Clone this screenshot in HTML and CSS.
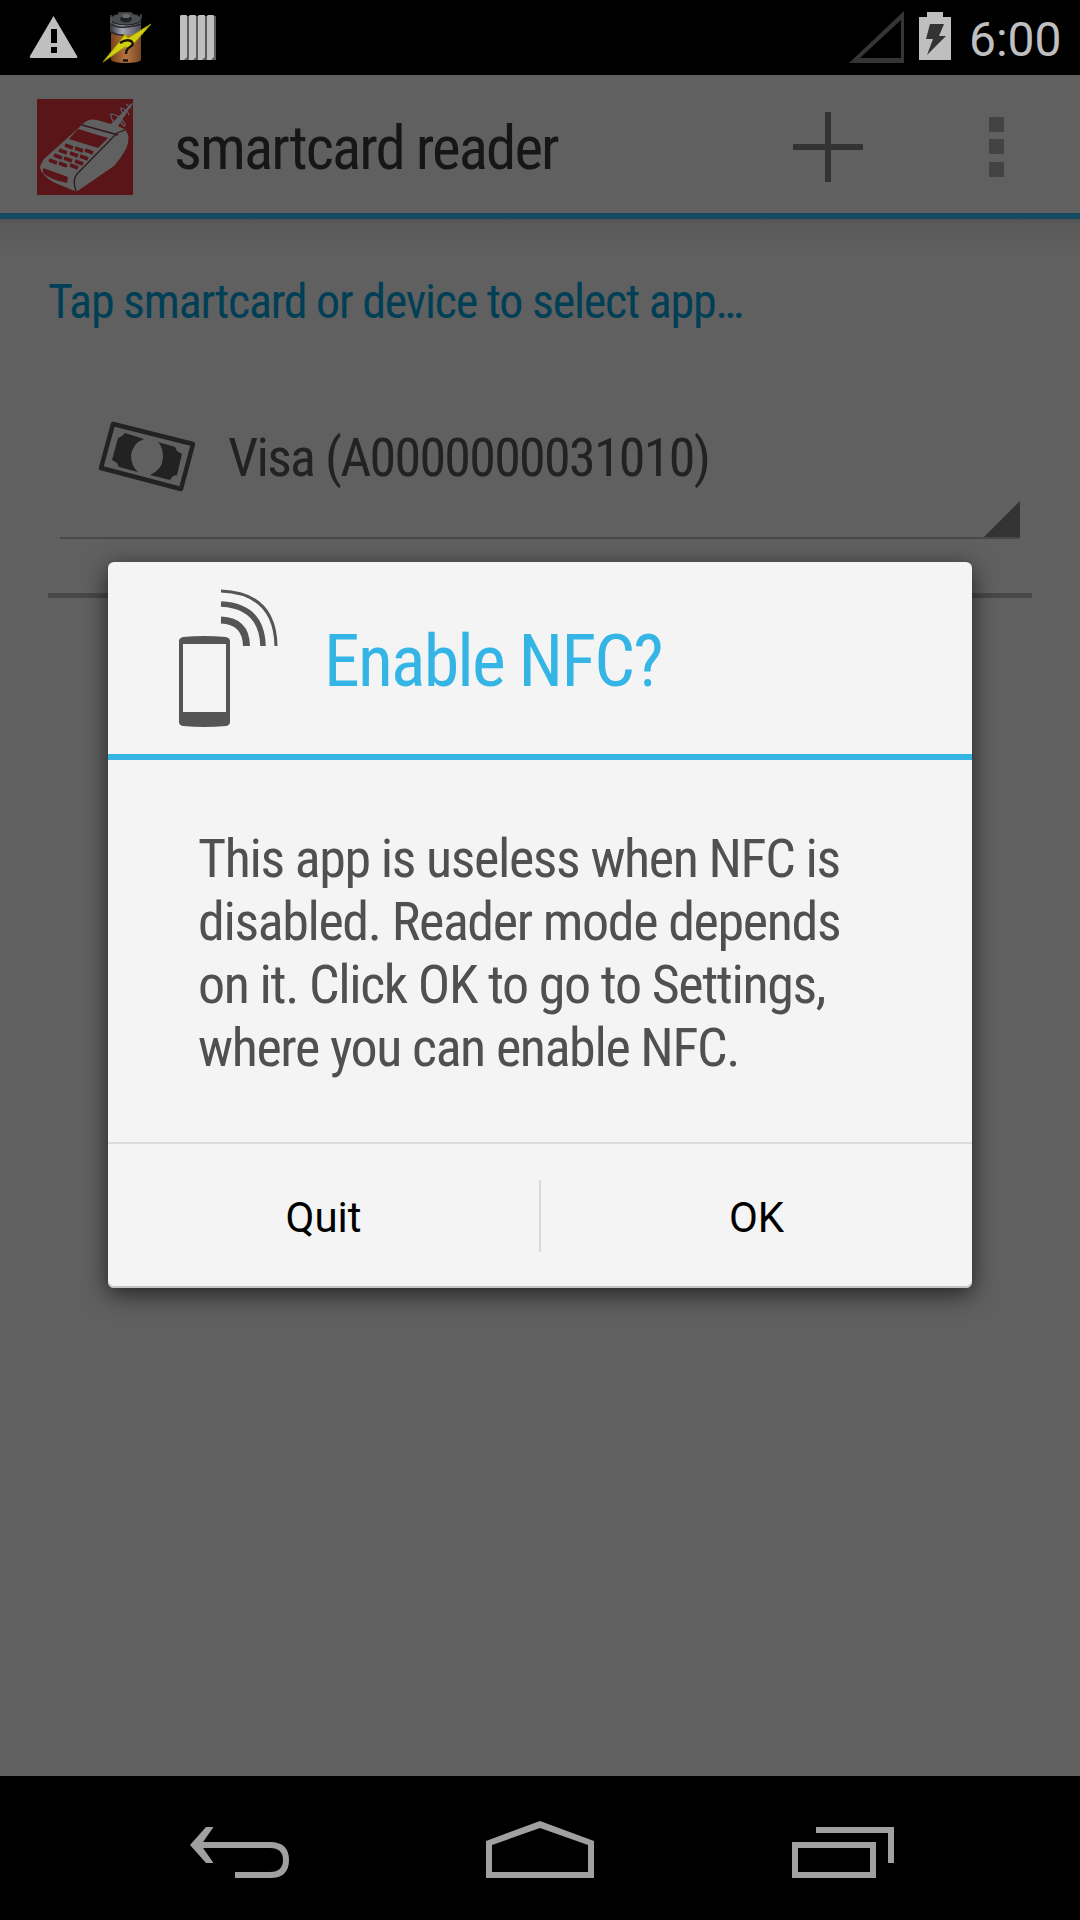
FILE: index.html
```html
<!DOCTYPE html>
<html lang="en">
<head>
<meta charset="utf-8">
<title>smartcard reader</title>
<link rel="stylesheet" href="styles.css">
</head>
<body>
<div class="screen">
  <header class="status">
    <svg class="status-left" width="240" height="75" viewBox="0 0 240 75">
      <path d="M53.500 16 77 56q1 2-1 2H32q-3 0-2-2z" fill="#bfbfbf"/>
      <path d="M51 29h6v14h-6zM51 47h6v6h-6z" fill="#000"/>
      <defs>
        <linearGradient id="silver"><stop offset="0" stop-color="#34343c"/><stop offset=".4" stop-color="#a4a4b4"/><stop offset="1" stop-color="#4a4a55"/></linearGradient>
        <linearGradient id="copper"><stop offset="0" stop-color="#79421e"/><stop offset=".5" stop-color="#b5763f"/><stop offset="1" stop-color="#784823"/></linearGradient>
      </defs>
      <path d="M111 33h30v27q-2 3-15 3t-15-3z" fill="url(#copper)"/>
      <path d="M110 19v13q2 3 16 3t15-3V19z" fill="url(#silver)"/>
      <ellipse cx="126" cy="19" rx="15.500" ry="6" fill="#4b4d50" stroke="#18191b"/>
      <path d="M111 15v8M141 14v4M118 13h14" stroke="#777" stroke-width="1"/>
      <ellipse cx="126" cy="19" rx="6" ry="3.500" fill="#202225"/><ellipse cx="126" cy="16" rx="4" ry="2" fill="#6b6d70"/>
      <path d="M111 24q5 4 15 3t15-3M111 32q7 4 15 3" fill="none" stroke="#24252c" stroke-width="1.500"/>
      <path d="M151 24 130 48l-5-1-22 15 17-21 5-7 3 4z" fill="#d2d00e" stroke="#99960a"/>
      <path d="M120 43q6-4 11-2 4 3-1 6-4 2-4 7M123 60.500h5" fill="none" stroke="#17130a" stroke-width="2.500"/>
      <path d="M182 16h34v44h-34z" fill="#5c5c5c"/>
      <path d="M180 16q0-1 2-1h4q1 0 1 1v41l-3 3h-4zM189 16q0-1 2-1h4q1 0 1 1v41l-3 3h-4zM198 16q0-1 2-1h4q1 0 1 1v41l-3 3h-4zM207 16q0-1 2-1h4q1 0 1 1v41l-3 3h-4z" fill="#bfbfbf"/>
    </svg>
    <svg width="113" height="75" viewBox="845 0 113 75">
      <path d="M849 63 904 11v52zM860 58h41V20z" fill="#333537" fill-rule="evenodd"/>
      <path d="M927 12h16v5h8v43h-32V17h8z" fill="#bfbfbf"/>
      <path d="M930 24h14l-5 12h7l-19 19 6-16h-7z" fill="#333"/>
    </svg>
    <span class="clock">6:00</span>
  </header>

  <div class="bar">
    <svg class="logo" width="96" height="96" viewBox="0 0 96 96">
      <path d="M0 0h96v96H0z" fill="#591517"/>
      <path d="M46 25q5-6 14-4l14 4L94 5l2-1-15 23 6 3q6 4 4 14-2 9-14 23L42 91q-2 2-7 0L16 83Q5 76 3 69q0-3 4-9z" fill="#606060"/>
      <path d="M45 26 81 36M88 31 80 34 40 75q-5 6-1 17" fill="none" stroke="#301820" stroke-width="1.300"/>
      <path d="M41 30 71 39 61 49 32 40zM6 69l25 9-1 6Q14 81 6 74z" fill="#591517"/>
      <path d="M28 46l8 3M38 49l8 3M48 51l8 3M22 51l8 3M33 54l8 3M43 57l8 3M17 56l8 3M27 59l8 3M38 62l8 3M12 61l8 3M22 64l8 3M33 66l8 3" stroke="#591517" stroke-width="3.500"/>
      <path d="M79 27q-6-9-5-12 6 0 12 7 4 5 1 5-5-4-4-10M88 17q-5-6-4-8 6 1 8 7M94 9l-5-4M90 10l5-5" fill="none" stroke="#58616b" stroke-width="1.200"/>
    </svg>
    <h1 class="title cond">smartcard reader</h1>
    <svg class="plus" width="72" height="72" viewBox="0 0 72 72"><path d="M33 1h6v32h32v6H39v32h-6V39H1v-6h32z" fill="#333"/></svg>
    <svg class="more" width="15" height="60" viewBox="0 0 15 60"><path d="M0 0h15v15H0zM0 22h15v15H0zM0 45h15v15H0z" fill="#434343"/></svg>
  </div>

  <main class="content">
    <p class="hint cond">Tap smartcard or device to select app…</p>
    <div class="spinner">
      <svg class="note" width="98" height="72" viewBox="98 420 98 72">
        <path d="M113 423 193 443 181 488 101 467z" fill="none" stroke="#222" stroke-width="4.500" stroke-linejoin="round"/>
        <path d="M125 432l19 6q-11 4-13 16 0 11 7 17l-19-5-2-4-5-3 6-22 4-2zM158 441l17 5 2 4 5 3-5 21-4 1-3 4-20-5q12-5 13-17 0-11-5-16z" fill="#222"/>
      </svg>
      <span class="choice cond">Visa (A0000000031010)</span>
      <svg class="corner" width="36" height="36" viewBox="0 0 36 36"><path d="M36 0v36H0z" fill="#333"/></svg>
    </div>
    <div class="rule"></div>
  </main>

  <nav class="nav">
    <svg width="1080" height="144" viewBox="0 1776 1080 144" fill="#a0a0a0">
      <path d="M201 1842h69q19 0 19 18t-19 18h-35v-6h35q13 0 13-12t-13-12h-69z"/>
      <path d="M206 1827h7.500l-12.500 18 12.500 18H206l-16-18z"/>
      <path d="M486 1841 540 1821 594 1841V1878H486zM492 1845V1872H588V1845L540 1828z" fill-rule="evenodd"/>
      <path d="M792 1842h84v36h-84zM798 1848v24h72v-24zM816 1827h78v36h-6v-30h-72z" fill-rule="evenodd"/>
    </svg>
  </nav>

  <section class="dialog">
    <div class="dialog-head">
      <svg class="phone" width="110" height="150" viewBox="172 580 110 150">
        <path d="M179 641q0-3 4-4 21-2 43 0 4 1 4 4v81q0 3-4 4-22 2-43 0-4-1-4-4zM183 644v68h43v-68z" fill="#555" fill-rule="evenodd"/>
        <g fill="none" stroke="#555"><path d="M221 591q54 2 55 55" stroke-width="3"/><path d="M221 604q41 2 42 42" stroke-width="5.500"/><path d="M221 620q25 1 25.500 26" stroke-width="7"/></g>
      </svg>
      <h2 class="dialog-title cond">Enable NFC?</h2>
    </div>
    <p class="message cond">This app is useless when NFC is<br>disabled. Reader mode depends<br>on it. Click OK to go to Settings,<br>where you can enable NFC.</p>
    <div class="actions"><button>Quit</button><i></i><button>OK</button></div>
  </section>
</div>
</body>
</html>
```
FILE: styles.css
```css
* { box-sizing: border-box; margin: 0; padding: 0; }
body { background: #606060; font-family: Roboto, sans-serif; }
.screen { position: relative; width: 1080px; height: 1920px; display: flex; flex-direction: column; overflow: hidden; }
.cond { font-family: "Roboto Condensed", Roboto, sans-serif; font-stretch: 75%; font-weight: 450; letter-spacing: -.0255em; white-space: nowrap; }
.status { height: 75px; background: #000; display: flex; }
.status-left { margin-right: auto; }
.status svg, .nav svg { display: block; }
.clock { width: 122px; padding-left: 11px; color: #bfbfbf; font-size: 48px; line-height: 80px; }
.bar { height: 144px; border-bottom: 6px solid #154a60; display: flex; align-items: center; padding: 6px 76px 0 37px; }
.title { flex: 1; margin-left: 41px; padding-top: 2px; font-size: 61px; letter-spacing: -.031em; color: #161616; }
.plus { margin-right: 125px; }
.content { flex: 1; padding: 48px 48px 0; background: linear-gradient(#525252, #595959 4px, #606060 36px); }
.hint { font-size: 48px; line-height: 70px; color: #003f56; }
.spinner { position: relative; display: flex; align-items: center; height: 170px; margin: 32px 12px 0; padding: 8px 0 0 38px; border-bottom: 2px solid #484848; }
.choice { margin-left: 32px; font-size: 54px; letter-spacing: -.032em; color: #222; }
.corner { position: absolute; right: 0; bottom: 0; }
.rule { height: 5px; margin-top: 54px; background: #484848; }
.nav { height: 144px; background: #000; }
.dialog { position: absolute; left: 108px; top: 562px; width: 864px; height: 726px; border-radius: 6px; background: #f4f4f4; box-shadow: 0 6px 24px rgba(0,0,0,.65), inset 0 -2px #c4c4c4; display: flex; flex-direction: column; }
.dialog-head { height: 198px; border-bottom: 6px solid #35b5e5; display: flex; align-items: center; padding-left: 64px; }
.phone { margin-bottom: 6px; }
.dialog-title { margin-left: 42px; padding-top: 6px; font-size: 72px; color: #35b5e5; }
.message { flex: 1; padding: 67px 90px 0; font-size: 54px; line-height: 63px; color: #505050; }
.actions { height: 146px; border-top: 2px solid #dadada; display: flex; align-items: center; }
.actions button { flex: 1; border: 0; background: none; padding-top: 2px; font: 42px Roboto, sans-serif; color: #000; }
.actions i { width: 2px; height: 72px; background: #dadada; }
```
